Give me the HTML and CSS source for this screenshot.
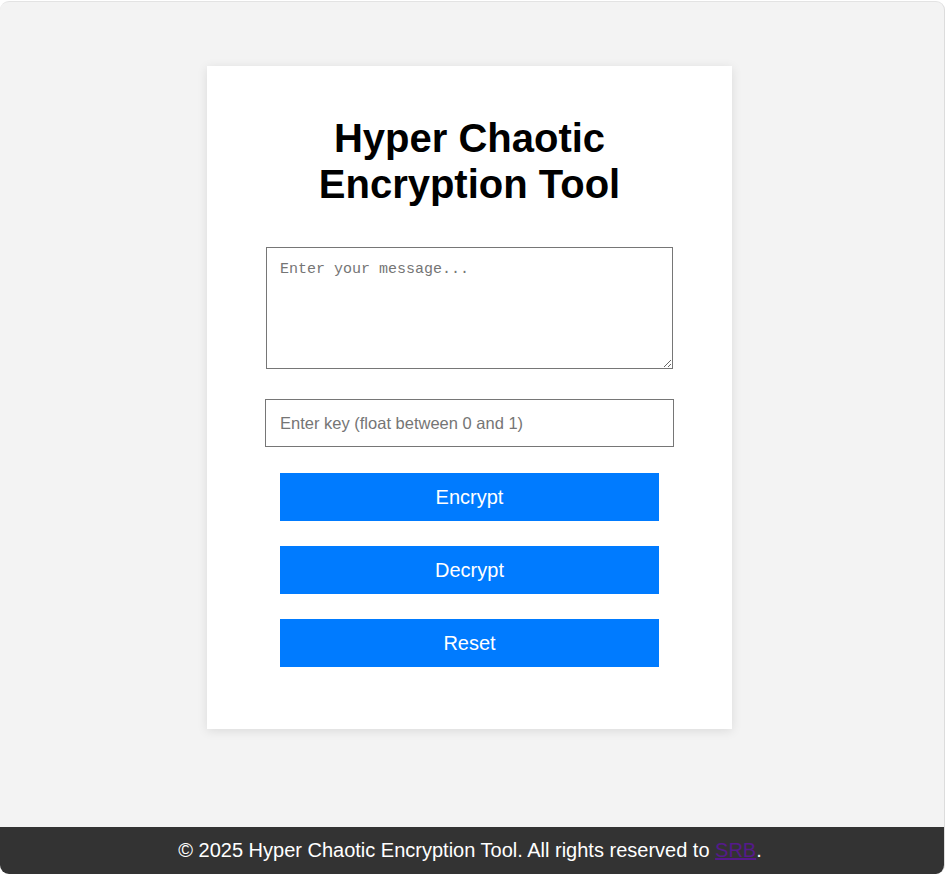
FILE: index.html
```html
<!DOCTYPE html>
<html lang="en">
<head>
<meta charset="UTF-8">
<title>Hyper Chaotic Encryption Tool</title>
<link rel="stylesheet" href="styles.css">
</head>
<body>
<div class="window">
  <main class="main">
    <div class="card">
      <h1 class="title">Hyper Chaotic<br>Encryption Tool</h1>
      <textarea class="message" placeholder="Enter your message..."></textarea>
      <input class="key" type="text" placeholder="Enter key (float between 0 and 1)">
      <div class="buttons">
        <button class="btn">Encrypt</button>
        <button class="btn">Decrypt</button>
        <button class="btn">Reset</button>
      </div>
    </div>
  </main>
  <footer class="footer">
    <p class="footer-text">&copy; 2025 Hyper Chaotic Encryption Tool. All rights reserved to <a class="footer-link" href="#">SRB</a>.</p>
  </footer>
</div>
</body>
</html>
```

FILE: styles.css
```css
html, body {
  margin: 0;
  padding: 0;
}
body {
  background: #ffffff;
  padding-top: 1px;
  font-family: "Liberation Sans", Arial, sans-serif;
}
.window {
  box-sizing: border-box;
  height: 873px;
  background: #f3f3f3;
  border-top: 1px solid #e3e3e3;
  border-right: 1px solid #dcdcdc;
  border-radius: 9px;
  overflow: hidden;
  display: flex;
  flex-direction: column;
}
.main {
  flex: 1;
  display: flex;
  justify-content: center;
  align-items: flex-start;
  padding: 64px 5px 0 0;
}
.card {
  box-sizing: border-box;
  width: 525px;
  background: #ffffff;
  box-shadow: 0 2px 10px rgba(0, 0, 0, 0.1);
  padding: 49px 0 62px;
  display: flex;
  flex-direction: column;
  align-items: center;
}
.title {
  margin: 0;
  font-size: 40px;
  font-weight: bold;
  line-height: 46px;
  text-align: center;
  color: #000;
}
.message {
  box-sizing: border-box;
  width: 407px;
  height: 122px;
  margin: 40px 0 0;
  padding: 13px 13px;
  border: 1px solid #767676;
  font-family: "Liberation Mono", "DejaVu Sans Mono", monospace;
  font-size: 15px;
  line-height: 18px;
  resize: vertical;
  display: block;
}
.message::placeholder {
  color: #757575;
}
.key {
  box-sizing: border-box;
  width: 409px;
  height: 48px;
  margin: 30px 0 0;
  padding: 0 14px;
  border: 1px solid #767676;
  font-family: "Liberation Sans", Arial, sans-serif;
  font-size: 16.5px;
  display: block;
}
.key::placeholder {
  color: #757575;
}
.buttons {
  margin-top: 26px;
  display: flex;
  flex-direction: column;
  gap: 25px;
}
.btn {
  width: 379px;
  height: 48px;
  border: none;
  background: #007bff;
  color: #ffffff;
  font-family: "Liberation Sans", Arial, sans-serif;
  font-size: 20px;
  padding: 0;
  cursor: pointer;
}
.footer {
  height: 47px;
  background: #333333;
  display: flex;
  align-items: center;
  justify-content: center;
  padding-right: 4px;
}
.footer-text {
  margin: 0;
  color: #ffffff;
  font-size: 20px;
}
.footer-link {
  color: #551a8b;
}
```
